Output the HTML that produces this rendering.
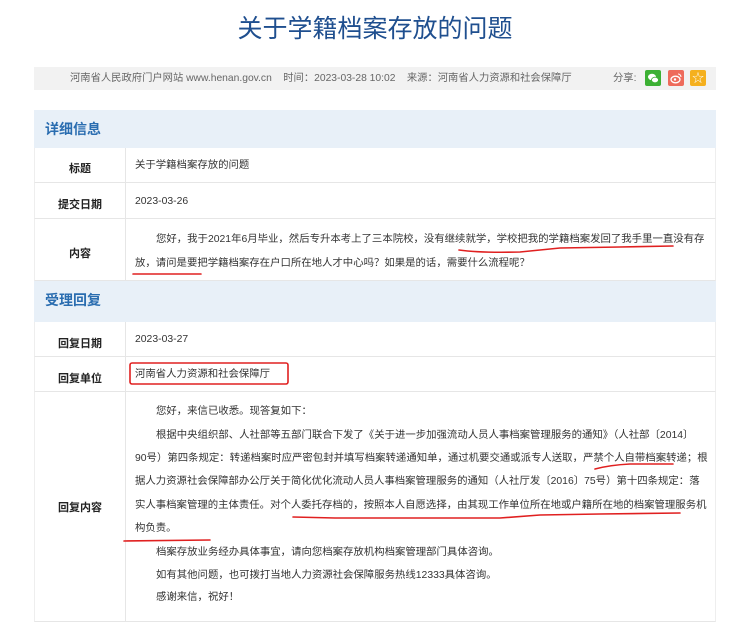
<!DOCTYPE html>
<html><head><meta charset="utf-8">
<style>
*{margin:0;padding:0;box-sizing:border-box}
body{width:750px;height:604px;overflow:hidden;background:#fff;font-family:"Liberation Sans","Noto Sans CJK SC",sans-serif;color:#333;position:relative;font-size:12px}
.a{position:absolute;white-space:nowrap}
.title{left:0;width:750px;top:12px;text-align:center;font-size:25px;color:#1f4f8f;line-height:34px}
.bar{left:34px;top:67px;width:682px;height:23px;background:#f2f2f2}
.meta{left:70px;top:70px;font-size:10.3px;color:#666;line-height:17px}
.ic{position:absolute;top:70px;width:16px;height:16px;border-radius:2px}
.sec{left:34px;width:682px;background:#e8f0f8;font-size:14px;font-weight:bold;color:#2a6db0;padding-left:11px}
.row{left:34px;width:682px;border-bottom:1px solid #e6e6e6;border-left:1px solid #eee;border-right:1px solid #eee}
.lab{position:absolute;left:0;width:91px;height:100%;border-right:1px solid #e6e6e6;text-align:center;font-weight:bold;font-size:11px;color:#222}
.t{font-size:10.4px;color:#333;line-height:17px}
</style></head><body>
<div class="a title">关于学籍档案存放的问题</div>
<div class="a bar"></div>
<div class="a meta">河南省人民政府门户网站 www.henan.gov.cn&nbsp;&nbsp;&nbsp;&nbsp;时间：2023-03-28 10:02&nbsp;&nbsp;&nbsp;&nbsp;来源：河南省人力资源和社会保障厅</div>
<div class="a meta" style="left:613px">分享:</div>
<div class="ic" style="left:645px;background:#3cb034"><svg width="16" height="16"><ellipse cx="7" cy="7" rx="4" ry="3.2" fill="#fff"/><ellipse cx="10" cy="10" rx="3.5" ry="2.8" fill="#fff" stroke="#3cb034" stroke-width="0.8"/></svg></div>
<div class="ic" style="left:668px;background:#ee6b5b"><svg width="16" height="16"><ellipse cx="7.5" cy="9.5" rx="4.5" ry="3.3" fill="none" stroke="#fff" stroke-width="1.3"/><circle cx="7" cy="9.5" r="1.2" fill="#fff"/><path d="M10 4a3 3 0 0 1 3 3" stroke="#fff" fill="none" stroke-width="1.1"/></svg></div>
<div class="ic" style="left:690px;background:#f5b01e;color:#fff;font-size:12px;text-align:center;line-height:16px">☆</div>

<div class="a sec" style="top:110px;height:38px;line-height:38px">详细信息</div>
<div class="a row" style="top:148px;height:35px"><div class="lab" style="line-height:42px">标题</div></div>
<div class="a t" style="left:135px;top:157px">关于学籍档案存放的问题</div>
<div class="a row" style="top:183px;height:36px"><div class="lab" style="line-height:44px">提交日期</div></div>
<div class="a t" style="left:135px;top:193px">2023-03-26</div>
<div class="a row" style="top:219px;height:62px"><div class="lab" style="line-height:70px">内容</div></div>
<div class="a t" style="left:156px;top:231px">您好，我于2021年6月毕业，然后专升本考上了三本院校，没有继续就学，学校把我的学籍档案发回了我手里一直没有存</div>
<div class="a t" style="left:135px;top:255px">放，请问是要把学籍档案存在户口所在地人才中心吗？如果是的话，需要什么流程呢？</div>

<div class="a sec" style="top:281px;height:41px;line-height:38px">受理回复</div>
<div class="a row" style="top:322px;height:35px"><div class="lab" style="line-height:44px">回复日期</div></div>
<div class="a t" style="left:135px;top:331px">2023-03-27</div>
<div class="a row" style="top:357px;height:35px"><div class="lab" style="line-height:44px">回复单位</div></div>
<div class="a t" style="left:135px;top:366px">河南省人力资源和社会保障厅</div>
<div class="a row" style="top:392px;height:230px"><div class="lab" style="line-height:232px">回复内容</div></div>
<div class="a t" style="left:156px;top:403px">您好，来信已收悉。现答复如下：</div>
<div class="a t" style="left:156px;top:427px">根据中央组织部、人社部等五部门联合下发了《关于进一步加强流动人员人事档案管理服务的通知》（人社部〔2014〕</div>
<div class="a t" style="left:135px;top:450px">90号）第四条规定：转递档案时应严密包封并填写档案转递通知单，通过机要交通或派专人送取，严禁个人自带档案转递；根</div>
<div class="a t" style="left:135px;top:473px">据人力资源社会保障部办公厅关于简化优化流动人员人事档案管理服务的通知（人社厅发〔2016〕75号）第十四条规定：落</div>
<div class="a t" style="left:135px;top:497px">实人事档案管理的主体责任。对个人委托存档的，按照本人自愿选择，由其现工作单位所在地或户籍所在地的档案管理服务机</div>
<div class="a t" style="left:135px;top:520px">构负责。</div>
<div class="a t" style="left:156px;top:544px">档案存放业务经办具体事宜，请向您档案存放机构档案管理部门具体咨询。</div>
<div class="a t" style="left:156px;top:567px">如有其他问题，也可拨打当地人力资源社会保障服务热线12333具体咨询。</div>
<div class="a t" style="left:156px;top:589px">感谢来信，祝好！</div>

<svg class="a" style="left:0;top:0" width="750" height="604">
<g stroke="#e02020" stroke-width="1.6" fill="none" stroke-linecap="round">
<path d="M459 250 Q480 253 520 252 L560 248 L620 247 L673 246"/>
<path d="M133 274 L201 274"/>
<rect x="130" y="363" width="158" height="21" rx="2"/>
<path d="M595 469 Q610 465 630 464 L673 464"/>
<path d="M293 517 L335 518 L500 518 L540 515 L600 514 L680 513"/>
<path d="M124 541 L210 540"/>
</g>
</svg>
</body></html>
